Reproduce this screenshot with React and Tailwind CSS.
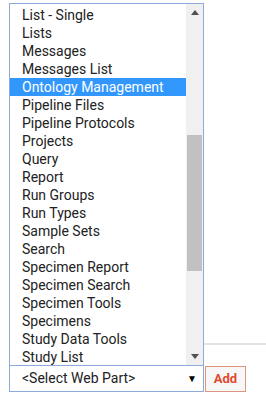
const items = [
  "List - Single",
  "Lists",
  "Messages",
  "Messages List",
  "Ontology Management",
  "Pipeline Files",
  "Pipeline Protocols",
  "Projects",
  "Query",
  "Report",
  "Run Groups",
  "Run Types",
  "Sample Sets",
  "Search",
  "Specimen Report",
  "Specimen Search",
  "Specimen Tools",
  "Specimens",
  "Study Data Tools",
  "Study List",
];

export default function App() {
  return (
    <div className="relative w-[266px] h-[404px] overflow-hidden bg-white font-['Roboto',sans-serif] text-[14px] text-[#222]">
      <div className="absolute left-[203px] right-0 top-[343px] h-[2px] bg-[#e3e3e3]" />
      <div className="relative pl-[9px] pt-[3px]">
        <div className="flex w-[195px] h-[363px] border border-[#8eaadb] bg-white">
          <div className="flex-1 overflow-hidden pt-[2px]">
            {items.map((it) => (
              <div
                key={it}
                className={
                  "h-[18px] leading-[18px] pl-[12px] whitespace-nowrap " +
                  (it === "Ontology Management" ? "bg-[#3297fd] text-white" : "")
                }
              >
                {it}
              </div>
            ))}
          </div>
          <div className="w-[17px] bg-[#f0f0f0] flex flex-col items-center">
            <div className="h-[17px] w-full flex items-center justify-center">
              <svg width="8" height="5" viewBox="0 0 8 5"><path d="M0 5 L4 0 L8 5 Z" fill="#505050" /></svg>
            </div>
            <div className="mt-[114px] w-[15px] h-[136px] bg-[#c1c1c1]" />
            <div className="flex-1" />
            <div className="h-[17px] w-full flex items-center justify-center">
              <svg width="8" height="5" viewBox="0 0 8 5"><path d="M0 0 L4 5 L8 0 Z" fill="#505050" /></svg>
            </div>
          </div>
        </div>
        <div className="flex items-start -mt-[1px]">
          <div className="flex items-center w-[195px] h-[27px] border border-[#8eaadb] bg-white pl-[12px] pr-[6px]">
            <span className="flex-1">&lt;Select Web Part&gt;</span>
            <span className="text-[10px] text-black">▼</span>
          </div>
          <div className="ml-[1px] mt-[1px] w-[41px] h-[26px] border border-[#e0967e] bg-[#f7f7f7] flex items-center justify-center text-[#e2492e] font-bold text-[13px]">
            Add
          </div>
        </div>
      </div>
    </div>
  );
}
